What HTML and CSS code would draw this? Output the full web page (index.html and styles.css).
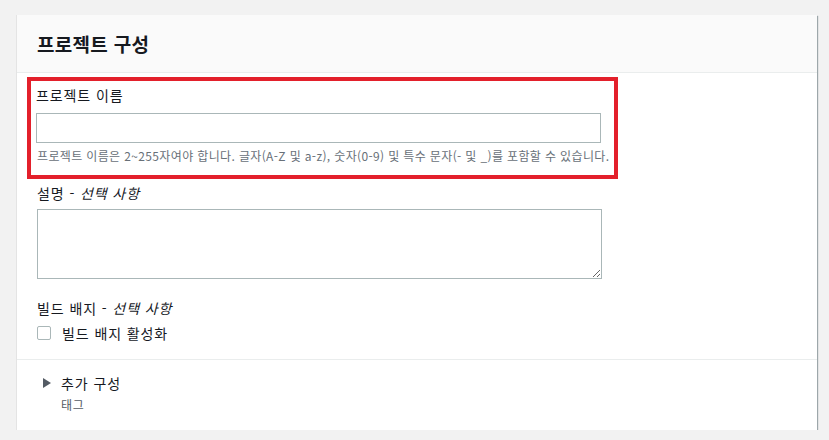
FILE: index.html
```html
<!DOCTYPE html>
<html lang="ko">
<head>
    <meta charset="UTF-8">
    <meta name="viewport" content="width=device-width, initial-scale=1.0">
    <title>프로젝트 구성</title>
    <link rel="stylesheet" href="styles.css">
</head>
<body>
    <div class="card">
        <div class="card-header">
            <h2>프로젝트 구성</h2>
        </div>
        <div class="card-body">
            <div class="field highlight">
                <label class="label" for="projectName">프로젝트 이름</label>
                <input type="text" id="projectName" class="text-input">
                <p class="hint">프로젝트 이름은 2~255자여야 합니다. 글자(A-Z 및 a-z), 숫자(0-9) 및 특수 문자(- 및 _)를 포함할 수 있습니다.</p>
            </div>
            <div class="field">
                <label class="label" for="description">설명 - <i>선택 사항</i></label>
                <textarea id="description" class="text-area"></textarea>
            </div>
            <div class="field field-badge">
                <span class="label">빌드 배지 - <i>선택 사항</i></span>
                <label class="check-row">
                    <input type="checkbox" class="check">
                    <span>빌드 배지 활성화</span>
                </label>
            </div>
        </div>
        <div class="card-extra">
            <div class="expander">
                <span class="caret"></span>
                <span>추가 구성</span>
            </div>
            <div class="extra-sub">태그</div>
        </div>
    </div>
</body>
</html>
```

FILE: styles.css
```css
body {
    margin: 0;
    padding: 15px 13px 0 16px;
    background-color: #f2f2f2;
    font-family: "Noto Sans CJK KR", "Liberation Sans", sans-serif;
    color: #16191f;
}
.card {
    width: 800px;
    background: #ffffff;
    border-left: 1px solid #e4e4e4;
    box-shadow: 1px 1px 1px 0 rgba(0, 28, 36, 0.35), 0 1px 0 0 rgba(0, 28, 36, 0.3);
}
.card-header {
    background: #fafafa;
    border-bottom: 1px solid #eaeded;
    height: 57px;
    display: flex;
    align-items: center;
    padding-left: 20px;
}
.card-header h2 {
    margin: 0;
    font-size: 19px;
    font-weight: bold;
    line-height: 24px;
    letter-spacing: 0.3px;
}
.card-body {
    padding: 4px 10px 16px 10px;
    border-bottom: 1px solid #eaeded;
}
.field {
    width: 591px;
    box-sizing: border-box;
    padding: 0 10px;
    margin-top: 4px;
}
.highlight {
    margin-top: 0;
    border: 4px solid #e3202b;
    padding: 4px 6px 11px 5px;
}
.label {
    display: block;
    font-size: 14px;
    line-height: 20px;
    letter-spacing: 0.9px;
    color: #16191f;
}
.label i {
    font-style: italic;
}
.text-input {
    display: block;
    box-sizing: border-box;
    width: 565px;
    height: 30px;
    margin: 8px 0 0 0;
    border: 1px solid #aab7b8;
    border-radius: 0;
    padding: 4px 8px;
    font-size: 14px;
}
.hint {
    margin: 5px 0 0 1px;
    font-size: 12px;
    line-height: 16px;
    letter-spacing: 0.36px;
    color: #687078;
    white-space: nowrap;
}
.text-area {
    display: block;
    box-sizing: border-box;
    width: 565px;
    height: 70px;
    margin-top: 6px;
    border: 1px solid #aab7b8;
    border-radius: 0;
    font-size: 14px;
}
.field-badge {
    margin-top: 19px;
}
.check-row {
    display: flex;
    align-items: center;
    gap: 11px;
    margin-top: 5px;
    font-size: 14px;
    line-height: 20px;
    letter-spacing: 0.9px;
}
.check {
    appearance: none;
    width: 14px;
    height: 14px;
    margin: 0;
    border: 1px solid #aab7b8;
    border-radius: 2px;
    background: #fff;
}
.card-extra {
    padding: 13px 20px 17px 26px;
}
.expander {
    display: flex;
    align-items: center;
    gap: 10px;
    font-size: 14px;
    line-height: 20px;
    letter-spacing: 0.9px;
    color: #16191f;
}
.caret {
    width: 0;
    height: 0;
    border-top: 5px solid transparent;
    border-bottom: 5px solid transparent;
    border-left: 8px solid #545b64;
}
.extra-sub {
    margin: 4px 0 0 18px;
    font-size: 12px;
    line-height: 16px;
    letter-spacing: 0.6px;
    color: #545b64;
}
```
